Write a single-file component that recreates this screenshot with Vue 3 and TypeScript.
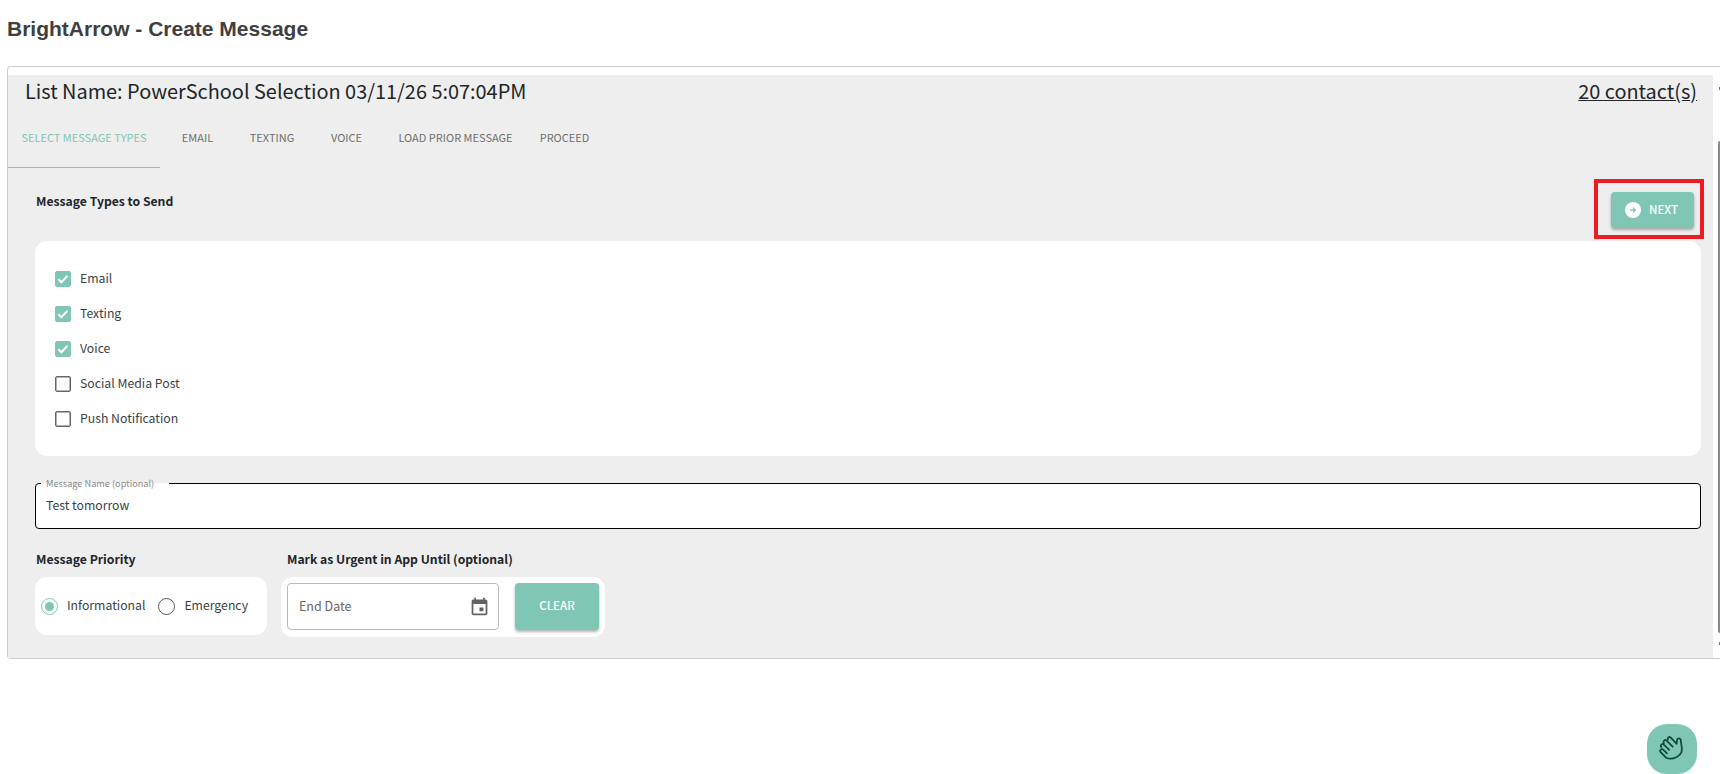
<script setup lang="ts">
import { ref } from 'vue'

const tabs = ref([
  { label: 'SELECT MESSAGE TYPES', cls: 'tab-select' },
  { label: 'EMAIL', cls: 'tab-email' },
  { label: 'TEXTING', cls: 'tab-texting' },
  { label: 'VOICE', cls: 'tab-voice' },
  { label: 'LOAD PRIOR MESSAGE', cls: 'tab-load' },
  { label: 'PROCEED', cls: 'tab-proceed' },
])

const types = ref([
  { label: 'Email', checked: true },
  { label: 'Texting', checked: true },
  { label: 'Voice', checked: true },
  { label: 'Social Media Post', checked: false },
  { label: 'Push Notification', checked: false },
])
</script>

<template>
  <div class="page">
    <h1 class="title">BrightArrow - Create Message</h1>
    <div class="frame">
      <div class="panel">
        <div class="list-row">
          <span>List Name: PowerSchool Selection 03/11/26 5:07:04PM</span>
          <a class="contacts">20 contact(s)</a>
        </div>
        <div class="tabs">
          <div v-for="t in tabs" :key="t.label" class="tab" :class="t.cls">{{ t.label }}</div>
        </div>
        <div class="body">
          <div class="types-head">
            <div class="section-label">Message Types to Send</div>
            <div class="next-outline">
              <button class="btn next">
                <svg class="next-icon" viewBox="0 0 24 24" width="16" height="16">
                  <circle cx="12" cy="12" r="12" fill="#fff" />
                  <path d="M12.500 7.500l-1.100 1.100 2 2.100H7.500v2.600h5.900l-2 2.100 1.100 1.100L17 12z" fill="#7fc6b4" />
                </svg>
                <span>NEXT</span>
              </button>
            </div>
          </div>
          <div class="card types">
            <label v-for="t in types" :key="t.label" class="check-row">
              <span class="box" :class="{ on: t.checked }">
                <svg v-if="t.checked" viewBox="0 0 16 16" width="16" height="16">
                  <path d="M3.300 8.300l3 3 6.300-6.600" fill="none" stroke="#fff" stroke-width="2" />
                </svg>
              </span>
              <span class="check-label">{{ t.label }}</span>
            </label>
          </div>
          <div class="field">
            <span class="field-label">Message Name (optional)</span>
            <span class="field-value">Test tomorrow</span>
          </div>
          <div class="bottom">
            <div class="col-priority">
              <div class="section-label small">Message Priority</div>
              <div class="card priority">
                <span class="radio on"><i></i></span>
                <span class="radio-label first">Informational</span>
                <span class="radio"></span>
                <span class="radio-label">Emergency</span>
              </div>
            </div>
            <div class="col-urgent">
              <div class="section-label small">Mark as Urgent in App Until (optional)</div>
              <div class="card urgent">
                <div class="date">
                  <span class="date-text">End Date</span>
                  <svg viewBox="0 0 24 24" width="21" height="21">
                    <path fill="#5f6368" d="M19 4h-1V2h-2v2H8V2H6v2H5c-1.100 0-2 .9-2 2v14c0 1.100.9 2 2 2h14c1.100 0 2-.9 2-2V6c0-1.100-.9-2-2-2zm0 16H5V9h14v11zm-7-7h4.500v4.500H12z" />
                  </svg>
                </div>
                <button class="btn clear">CLEAR</button>
              </div>
            </div>
          </div>
        </div>
      </div>
    </div>
    <div class="scroll-mark mark-top"></div>
    <div class="scroll-thumb"></div>
    <div class="scroll-mark mark-bottom"></div>
    <button class="chat" aria-label="Chat">
      <svg viewBox="0 0 24 24" width="32" height="32" fill="none" stroke="#0f4a3c" stroke-width="1.300" stroke-linecap="round" stroke-linejoin="round">
        <path d="M7.500 18.500l-4-4.200a1.300 1.300 0 0 1 1.900-1.800l2.800 2.800M4 10.500a1.300 1.300 0 0 1 1.900-1.800l4 4M6 7.500a1.300 1.300 0 0 1 1.900-1.800l4.600 4.600M9 5a1.300 1.300 0 0 1 1.900-1.700l4.600 4.800.3-3a1.400 1.400 0 0 1 2.700-.1l.9 6.500c.2 2-.4 3.600-1.800 5-2.500 2.500-6.800 3.600-10.100 2" />
      </svg>
    </button>
  </div>
</template>

<style>
html, body { margin: 0; background: #fff; overflow: hidden; }
</style>

<style scoped>
.page {
  position: relative;
  width: 1720px;
  height: 774px;
  overflow: hidden;
  font-family: "Noto Sans CJK SC", "Noto Sans", sans-serif;
  color: #212529;
  padding: 19px 0 0 7px;
  box-sizing: border-box;
}
.title {
  margin: 0;
  font: bold 21px/20px "Liberation Sans", Arial, sans-serif;
  color: #3f3f3f;
  height: 47px;
  white-space: nowrap;
}
.frame {
  width: 1713px;
  height: 593px;
  box-sizing: border-box;
  border: 1px solid #ccc;
  border-right: 0;
  border-radius: 4px 0 0 4px;
  padding-top: 8px;
  background: #fff;
}
.panel {
  background: #eee;
  height: 100%;
  width: 1705px;
}
.list-row {
  display: flex;
  justify-content: space-between;
  padding: 0 16px 0 17px;
  height: 34px;
  font-size: 19.900px;
  line-height: 32px;
  color: #212529;
  white-space: nowrap;
}
.contacts { text-decoration: underline; }
.tabs {
  display: flex;
  height: 59px;
}
.tab {
  height: 59px;
  box-sizing: border-box;
  line-height: 56px;
  font-size: 11px;
  color: #6f6f6f;
  text-align: center;
  white-space: nowrap;
}
.tab-select { width: 152px; color: #7fc6b4; border-bottom: 1px solid #7fc6b4; }
.tab-email { width: 75px; }
.tab-texting { width: 74px; }
.tab-voice { width: 75px; }
.tab-load { width: 143px; }
.tab-proceed { width: 75px; }
.body { padding: 0 12px 0 27px; }
.types-head {
  display: flex;
  justify-content: space-between;
  height: 73px;
}
.section-label {
  font-size: 12.200px;
  font-weight: 700;
  line-height: 19px;
  padding: 24px 0 0 1px;
  color: #212529;
  white-space: nowrap;
}
.section-label.small { padding-top: 0; height: 20px; }
.next-outline {
  margin: 11px -3px 0 0;
  width: 110px;
  height: 60px;
  box-sizing: border-box;
  border: 4px solid #ed1c24;
  padding: 9px 0 0 13px;
}
.btn {
  border: 0;
  border-radius: 4px;
  background: #7fc6b4;
  color: #fff;
  font-family: inherit;
  font-weight: 500;
  font-size: 11.500px;
  box-shadow: 0 2px 3px rgba(0,0,0,.3);
  padding: 0 0 2px;
}
.next {
  width: 83px;
  height: 36px;
  display: flex;
  align-items: center;
  gap: 8px;
  padding: 0 0 0 14px;
  box-sizing: border-box;
}
.next span { padding-bottom: 2px; }
.card { background: #fff; border-radius: 12px; }
.types {
  height: 215px;
  box-sizing: border-box;
  padding-top: 20px;
}
.check-row {
  display: flex;
  align-items: center;
  height: 35px;
  padding-left: 20px;
}
.box {
  width: 16px;
  height: 16px;
  border: 1px solid #666;
  border-radius: 2px;
  box-shadow: inset 0 0 0 .5px #666;
  display: block;
  box-sizing: border-box;
  margin-right: 9px;
  position: relative;
}
.box.on { background: #7fc6b4; border-color: #7fc6b4; box-shadow: none; }
.box svg { position: absolute; left: -1px; top: -1px; }
.check-label { font-size: 12.250px; color: #3a3f44; padding-bottom: 2px; }
.field {
  position: relative;
  margin-top: 27px;
  height: 46px;
  box-sizing: border-box;
  background: #fff;
  border: 1.500px solid #000;
  border-radius: 4px;
  padding: 0 10px 2px;
  display: flex;
  align-items: center;
}
.field-label {
  position: absolute;
  left: 5px;
  top: -7px;
  padding: 0 0 0 5px;
  background: linear-gradient(#eee 0 6px, #fff 6px);
  font-size: 9.200px;
  line-height: 12px;
  color: #888;
  width: 128px;
  box-sizing: border-box;
  white-space: nowrap;
}
.field-value { font-size: 12.250px; color: #3a3f44; }
.bottom { display: flex; margin-top: 21px; }
.col-priority { width: 246px; }
.col-urgent { flex: none; }
.col-urgent .section-label { padding-left: 6px; }
.priority {
  margin-top: 7px;
  width: 232px;
  height: 58px;
  display: flex;
  align-items: center;
  padding-left: 6px;
  box-sizing: border-box;
}
.radio {
  width: 17px;
  height: 17px;
  border: 1.500px solid #555;
  border-radius: 50%;
  box-sizing: border-box;
  display: flex;
  align-items: center;
  justify-content: center;
  margin-right: 9px;
}
.radio.on { border-color: #7fc6b4; }
.radio i { width: 9px; height: 9px; background: #7fc6b4; border-radius: 50%; display: block; }
.radio-label { font-size: 12.250px; color: #3a3f44; padding-bottom: 3px; }
.radio-label.first { margin-right: 13px; }
.urgent {
  margin-top: 7px;
  width: 324px;
  height: 60px;
  display: flex;
  padding: 6px 0 0 6px;
  box-sizing: border-box;
}
.date {
  width: 212px;
  height: 47px;
  box-sizing: border-box;
  border: 1px solid #bbb;
  border-radius: 4px;
  background: #fff;
  display: flex;
  align-items: center;
  justify-content: space-between;
  padding: 0 8px 0 11px;
}
.date-text { font-size: 12.500px; color: #666; padding-bottom: 3px; }
.clear {
  width: 84px;
  height: 47px;
  margin-left: 16px;
  padding-bottom: 3px;
}
.scroll-thumb {
  position: absolute;
  right: 0;
  top: 141px;
  width: 2px;
  height: 492px;
  background: #8a8a8a;
  border-radius: 2px 0 0 2px;
}
.scroll-mark {
  position: absolute;
  right: 0;
  width: 1px;
  height: 3px;
  background: #777;
}
.mark-top { top: 87px; }
.mark-bottom { top: 642px; }
.chat {
  position: absolute;
  left: 1647px;
  top: 724px;
  width: 50px;
  height: 50px;
  border: 0;
  padding: 0;
  background: #7fc6b4;
  border-radius: 20px;
  display: flex;
  align-items: center;
  justify-content: center;
}
</style>
